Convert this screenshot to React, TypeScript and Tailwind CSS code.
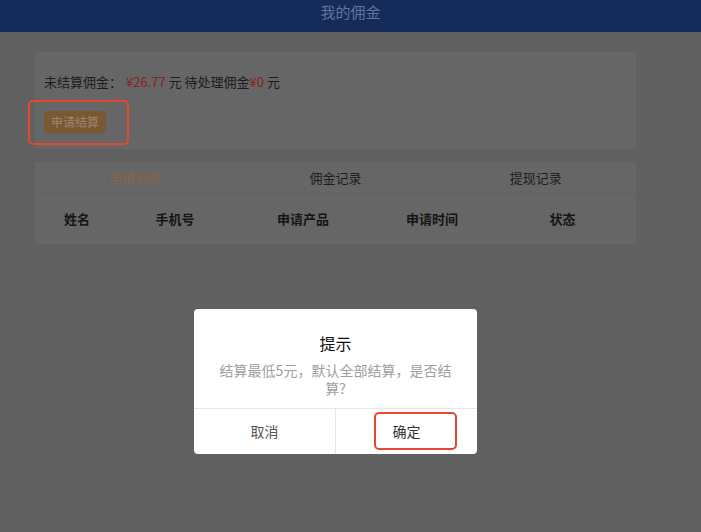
import React from 'react';

const font = { fontFamily: '"Noto Sans CJK SC", "Noto Sans", sans-serif' };

const tabs = ['申请记录', '佣金记录', '提现记录'];
const columns = ['姓名', '手机号', '申请产品', '申请时间', '状态'];

const App = () => {
  return (
    <div className="relative h-[532px] w-[701px] overflow-hidden bg-[#606060]" style={font}>
      <header className="flex h-[32px] justify-center bg-[#152c5b] pt-[3px]">
        <span className="text-[15px] leading-[18px] text-[#66739a]">我的佣金</span>
      </header>

      <div className="ml-[35px] mt-[20px] w-[601px]">
        <div className="bg-[#666666] px-[9px] pb-[16px] pt-[20px]">
          <p className="text-[13px] leading-[20px] text-[#1c1c1c]">
            未结算佣金：<span className="ml-[4px] text-[#8a2220]">¥26.77</span> 元 待处理佣金
            <span className="text-[#8a2220]">¥0</span> 元
          </p>
          <div className="relative mt-[19px] w-fit">
            <button
              type="button"
              className="flex h-[22px] items-center rounded-[3px] bg-[#7b5834] px-[7px] text-[12px] text-[#9c8670]"
            >
              申请结算
            </button>
            <div className="absolute -bottom-[12px] -left-[16px] -right-[23px] -top-[11px] z-20 rounded-[5px] border-2 border-[#e8472f]" />
          </div>
        </div>

        <div className="mt-[13px] bg-[#666666]">
          <div className="grid grid-cols-3 border-b border-[#616161]">
            {tabs.map((t, i) => (
              <div
                key={t}
                className={`flex h-[31px] items-center justify-center text-[13px] ${
                  i === 0 ? 'text-[#8a6444]' : 'text-[#1e1e1e]'
                }`}
              >
                {t}
              </div>
            ))}
          </div>
          <div className="grid h-[50px] grid-cols-[84px_112px_144px_114px_147px] items-center">
            {columns.map((c) => (
              <div key={c} className="text-center text-[13px] font-bold text-[#151515]">
                {c}
              </div>
            ))}
          </div>
        </div>
      </div>

      <div className="absolute left-[194px] top-[309px] z-30 w-[283px] overflow-hidden rounded-[4px] bg-white">
        <div className="px-[20px] pb-[11px] pt-[24px] text-center">
          <h2 className="text-[16px] leading-[20px] text-[#111]">提示</h2>
          <p className="mt-[8px] text-[14px] leading-[18px] text-[#a0a0a0]">
            结算最低5元，默认全部结算，是否结算?
          </p>
        </div>
        <div className="flex h-[46px] border-t border-[#e6e6e6]">
          <button type="button" className="flex-1 text-[14px] text-[#555]">
            取消
          </button>
          <div className="relative flex flex-1 items-center justify-center border-l border-[#e6e6e6]">
            <span className="text-[14px] text-[#333]">确定</span>
            <div className="absolute bottom-[4px] left-[38px] right-[20px] top-[3px] rounded-[5px] border-2 border-[#e8472f]" />
          </div>
        </div>
      </div>
    </div>
  );
};

export default App;
